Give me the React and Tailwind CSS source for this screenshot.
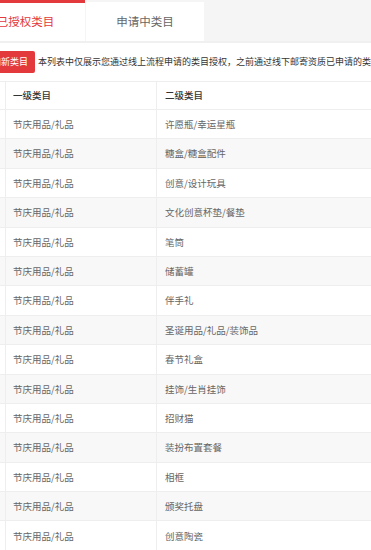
import React from "react";

const rows = [
  "许愿瓶/幸运星瓶",
  "糖盒/糖盒配件",
  "创意/设计玩具",
  "文化创意杯垫/餐垫",
  "笔筒",
  "储蓄罐",
  "伴手礼",
  "圣诞用品/礼品/装饰品",
  "春节礼盒",
  "挂饰/生肖挂饰",
  "招财猫",
  "装扮布置套餐",
  "相框",
  "颁奖托盘",
  "创意陶瓷",
];

export default function App() {
  return (
    <div
      className="w-[371px] h-[550px] overflow-hidden bg-white"
      style={{ fontFamily: '"Noto Sans CJK SC", "Noto Sans", sans-serif' }}
    >
      {/* tabs */}
      <div className="flex h-[43px] bg-[#f5f5f5] border-b-2 border-[#f0f0f0] -ml-[34px] w-[600px]">
        <div className="w-[119px] h-[41px] bg-white border-t-[3px] border-[#e4393c] flex items-center justify-center text-[11.5px] text-[#e4393c]">
          已授权类目
        </div>
        <div className="ml-px mt-[2px] w-[118px] h-[39px] bg-white flex items-center justify-center text-[11.5px] text-[#666]">
          申请中类目
        </div>
      </div>

      {/* notice */}
      <div className="flex items-center h-[38px] -ml-[24px] w-[800px]">
        <button className="h-[22px] px-[7px] bg-[#e4393c] text-white text-[9px] rounded-[2px] flex items-center">
          添加新类目
        </button>
        <span className="ml-[3px] text-[9px] text-[#333] whitespace-nowrap">
          本列表中仅展示您通过线上流程申请的类目授权，之前通过线下邮寄资质已申请的类目请联系客服查看
        </span>
      </div>

      {/* table */}
      <div className="-ml-[35px] w-[700px] border-t border-[#eee]">
        <div className="grid grid-cols-[40px_151px_1fr] h-[28px] border-b border-[#eee] text-[9.5px] text-[#333] font-medium">
          <div />
          <div className="border-l border-[#eee] pl-[7px] flex items-center">一级类目</div>
          <div className="border-l border-[#eee] pl-[8px] flex items-center">二级类目</div>
        </div>
        {rows.map((name, i) => (
          <div
            key={name}
            className={`grid grid-cols-[40px_151px_1fr] h-[29.4px] border-b border-[#eee] text-[9.5px] text-[#666] ${
              i % 2 === 1 ? "bg-[#f8f8f8]" : "bg-white"
            }`}
          >
            <div />
            <div className="border-l border-[#eee] pl-[7px] flex items-center">节庆用品/礼品</div>
            <div className="border-l border-[#eee] pl-[8px] flex items-center">{name}</div>
          </div>
        ))}
      </div>
    </div>
  );
}
